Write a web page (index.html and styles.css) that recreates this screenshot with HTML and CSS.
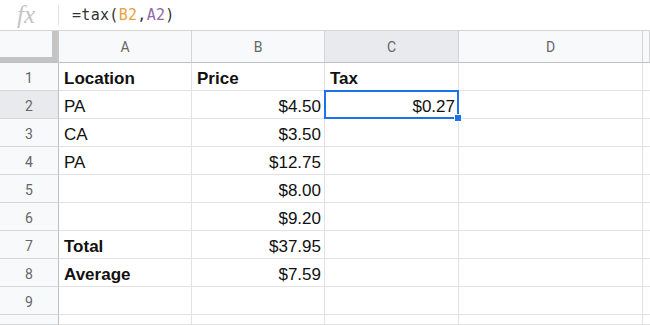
FILE: index.html
```html
<!DOCTYPE html>
<html lang="en">
<head>
    <meta charset="UTF-8">
    <title>Sheet - tax</title>
    <link rel="stylesheet" href="styles.css">
</head>
<body>
    <div class="formula-bar">
        <span class="fx">fx</span>
        <span class="formula">=tax(<span class="ref-b">B2</span>,<span class="ref-a">A2</span>)</span>
    </div>

    <div class="sheet">
        <div class="corner"><div class="corner-inner"></div></div>
        <div class="col-head">A</div>
        <div class="col-head">B</div>
        <div class="col-head active">C</div>
        <div class="col-head">D</div>
        <div class="col-head"></div>

        <div class="row-head">1</div>
        <div class="cell bold">Location</div>
        <div class="cell bold">Price</div>
        <div class="cell bold">Tax</div>
        <div class="cell"></div><div class="cell"></div>

        <div class="row-head active">2</div>
        <div class="cell">PA</div>
        <div class="cell num">$4.50</div>
        <div class="cell num selected">$0.27<span class="sel-box"><span class="handle"></span></span></div>
        <div class="cell"></div><div class="cell"></div>

        <div class="row-head">3</div>
        <div class="cell">CA</div>
        <div class="cell num">$3.50</div>
        <div class="cell"></div><div class="cell"></div><div class="cell"></div>

        <div class="row-head">4</div>
        <div class="cell">PA</div>
        <div class="cell num">$12.75</div>
        <div class="cell"></div><div class="cell"></div><div class="cell"></div>

        <div class="row-head">5</div>
        <div class="cell"></div>
        <div class="cell num">$8.00</div>
        <div class="cell"></div><div class="cell"></div><div class="cell"></div>

        <div class="row-head">6</div>
        <div class="cell"></div>
        <div class="cell num">$9.20</div>
        <div class="cell"></div><div class="cell"></div><div class="cell"></div>

        <div class="row-head">7</div>
        <div class="cell bold">Total</div>
        <div class="cell num">$37.95</div>
        <div class="cell"></div><div class="cell"></div><div class="cell"></div>

        <div class="row-head">8</div>
        <div class="cell bold">Average</div>
        <div class="cell num">$7.59</div>
        <div class="cell"></div><div class="cell"></div><div class="cell"></div>

        <div class="row-head">9</div>
        <div class="cell"></div><div class="cell"></div><div class="cell"></div><div class="cell"></div><div class="cell"></div>

        <div class="row-head"></div>
        <div class="cell"></div><div class="cell"></div><div class="cell"></div><div class="cell"></div><div class="cell"></div>
    </div>
</body>
</html>
```

FILE: styles.css
```css
html, body {
    width: 650px;
    height: 325px;
    overflow: hidden;
}
body {
    margin: 0;
    background-color: #ffffff;
    font-family: "Liberation Sans", Arial, sans-serif;
    color: #222;
}
.formula-bar {
    display: flex;
    align-items: center;
    height: 30px;
    border-bottom: 1px solid #d4d4d4;
}
.fx {
    width: 59px;
    padding-left: 17px;
    box-sizing: border-box;
    font-family: "Liberation Serif", serif;
    font-style: italic;
    font-size: 25px;
    color: #c4c4c4;
    border-right: 1px solid #e0e0e0;
    line-height: 20px;
    height: 20px;
}
.formula {
    padding-left: 13px;
    font-family: "DejaVu Sans Mono", monospace;
    font-size: 15px;
    letter-spacing: 0.3px;
    color: #333;
}
.ref-b {
    color: #e8a33a;
}
.ref-a {
    color: #8e6aa8;
}
.sheet {
    display: grid;
    height: 294px;
    grid-template-columns: 59px 133px 133px 134px 184px minmax(0, 1fr);
    grid-template-rows: 32px repeat(9, 28px) minmax(0, 1fr);
    overflow: hidden;
}
.sheet > div {
    box-sizing: border-box;
    border-right: 1px solid #e2e2e2;
    border-bottom: 1px solid #e2e2e2;
}
.sheet > .corner {
    background-color: #f8f9fa;
    border-right: 2px solid #c8c8c8;
    border-bottom: 1px solid #c0c0c0;
}
.corner-inner {
    height: 26px;
    border-right: 5px solid #c4c4c4;
    border-bottom: 5px solid #c4c4c4;
}
.sheet > .col-head {
    background-color: #f8f9fa;
    border-right: 1px solid #d4d4d4;
    border-bottom: 1px solid #c0c0c0;
    display: flex;
    align-items: center;
    justify-content: center;
    font-family: "Roboto", sans-serif;
    font-size: 14px;
    color: #666;
}
.sheet > .row-head {
    background-color: #f8f9fa;
    border-right: 1px solid #c0c0c0;
    border-bottom: 1px solid #d8d8d8;
    display: flex;
    align-items: center;
    justify-content: center;
    padding-top: 2px;
    font-family: "Roboto", sans-serif;
    font-size: 14px;
    color: #666;
}
.sheet > .active {
    background-color: #e8eaed;
}
.cell {
    display: flex;
    align-items: center;
    padding: 4px 3px 0 5px;
    font-size: 17px;
    color: #111;
}
.bold {
    font-weight: bold;
}
.num {
    justify-content: flex-end;
}
.selected {
    position: relative;
}
.sel-box {
    position: absolute;
    left: -1px;
    top: -1px;
    right: -1px;
    bottom: -1px;
    border: 2px solid #1a73e8;
}
.handle {
    position: absolute;
    right: -5px;
    bottom: -5px;
    width: 6px;
    height: 6px;
    background-color: #1a73e8;
    border: 1px solid #fff;
}
```
